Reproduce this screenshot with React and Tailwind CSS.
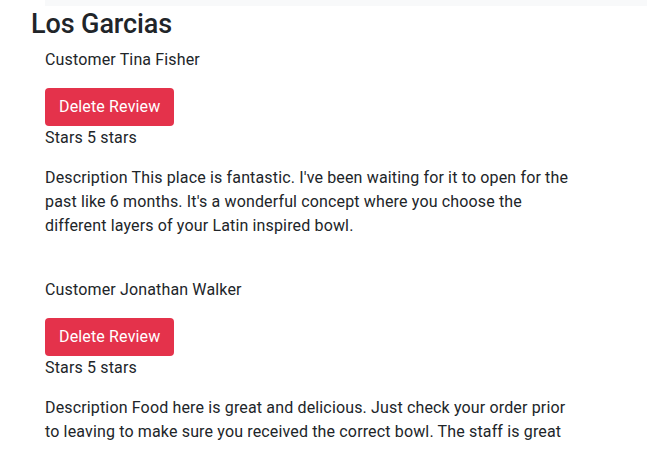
export default function App() {
  const reviews = [
    {
      customer: "Tina Fisher",
      stars: 5,
      description:
        "This place is fantastic. I've been waiting for it to open for the past like 6 months. It's a wonderful concept where you choose the different layers of your Latin inspired bowl.",
    },
    {
      customer: "Jonathan Walker",
      stars: 5,
      description:
        "Food here is great and delicious. Just check your order prior to leaving to make sure you received the correct bowl. The staff is great",
    },
  ];
  return (
    <div
      className="bg-white text-[#212529] text-[16px] leading-[24px] tracking-[0.15px]"
      style={{ fontFamily: "Roboto, 'Liberation Sans', sans-serif" }}
    >
      <div className="ml-[45px] h-[6px] bg-[#f8f9fa]" />
      <h3 className="pl-[31px] pt-[3px] text-[27px] leading-[31px] font-medium tracking-[-0.1px] mb-2">
        Los Garcias
      </h3>
      <div className="pl-[45px]">
        {reviews.map((r, i) => (
          <div key={i} className="mb-[40px]">
            <p className="mb-4">Customer {r.customer}</p>
            <button className="h-[38px] px-[14px] rounded-[4px] bg-[#e4324b] text-white text-[16px] leading-[24px] tracking-[0.15px]">
              Delete Review
            </button>
            <p className="mb-4">Stars {r.stars} stars</p>
            <p className="w-[530px]">Description {r.description}</p>
          </div>
        ))}
      </div>
    </div>
  );
}
